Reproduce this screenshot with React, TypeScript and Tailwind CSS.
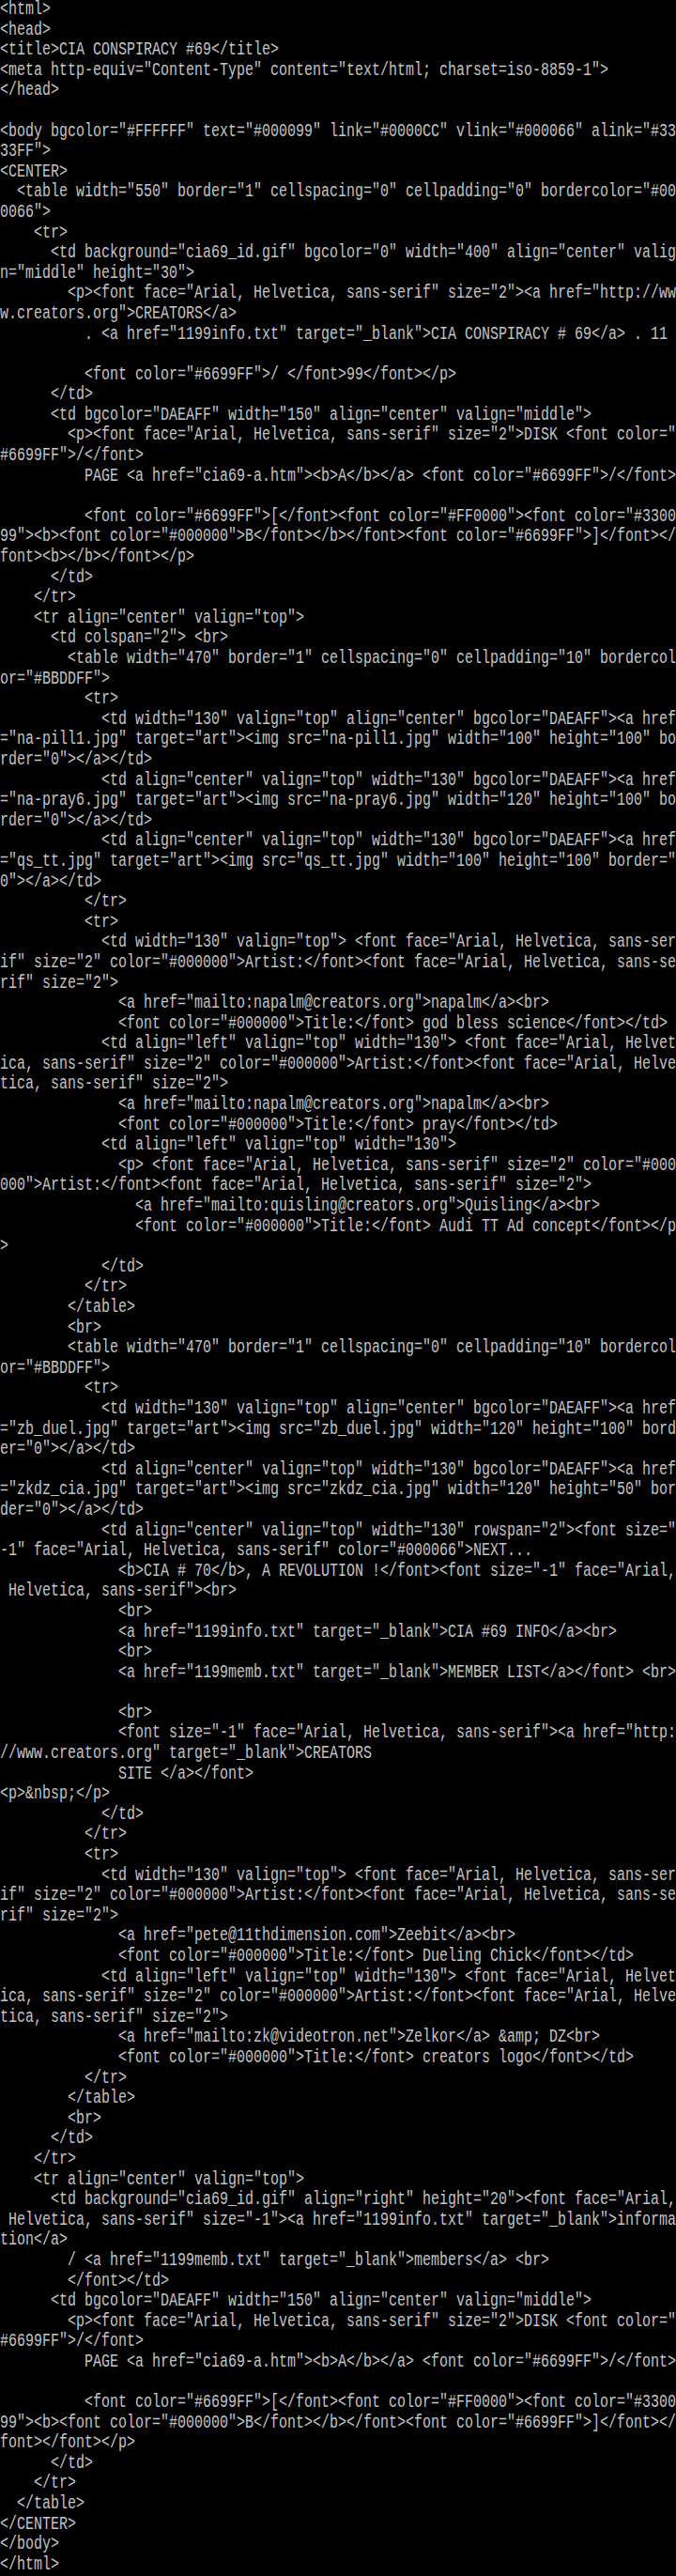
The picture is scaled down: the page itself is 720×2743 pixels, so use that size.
import React from "react";

const source = `<html>
<head>
<title>CIA CONSPIRACY #69</title>
<meta http-equiv="Content-Type" content="text/html; charset=iso-8859-1">
</head>

<body bgcolor="#FFFFFF" text="#000099" link="#0000CC" vlink="#000066" alink="#33
33FF">
<CENTER>
  <table width="550" border="1" cellspacing="0" cellpadding="0" bordercolor="#00
0066">
    <tr>
      <td background="cia69_id.gif" bgcolor="0" width="400" align="center" valig
n="middle" height="30">
        <p><font face="Arial, Helvetica, sans-serif" size="2"><a href="http://ww
w.creators.org">CREATORS</a>
          . <a href="1199info.txt" target="_blank">CIA CONSPIRACY # 69</a> . 11

          <font color="#6699FF">/ </font>99</font></p>
      </td>
      <td bgcolor="DAEAFF" width="150" align="center" valign="middle">
        <p><font face="Arial, Helvetica, sans-serif" size="2">DISK <font color="
#6699FF">/</font>
          PAGE <a href="cia69-a.htm"><b>A</b></a> <font color="#6699FF">/</font>

          <font color="#6699FF">[</font><font color="#FF0000"><font color="#3300
99"><b><font color="#000000">B</font></b></font><font color="#6699FF">]</font></
font><b></b></font></p>
      </td>
    </tr>
    <tr align="center" valign="top">
      <td colspan="2"> <br>
        <table width="470" border="1" cellspacing="0" cellpadding="10" bordercol
or="#BBDDFF">
          <tr>
            <td width="130" valign="top" align="center" bgcolor="DAEAFF"><a href
="na-pill1.jpg" target="art"><img src="na-pill1.jpg" width="100" height="100" bo
rder="0"></a></td>
            <td align="center" valign="top" width="130" bgcolor="DAEAFF"><a href
="na-pray6.jpg" target="art"><img src="na-pray6.jpg" width="120" height="100" bo
rder="0"></a></td>
            <td align="center" valign="top" width="130" bgcolor="DAEAFF"><a href
="qs_tt.jpg" target="art"><img src="qs_tt.jpg" width="100" height="100" border="
0"></a></td>
          </tr>
          <tr>
            <td width="130" valign="top"> <font face="Arial, Helvetica, sans-ser
if" size="2" color="#000000">Artist:</font><font face="Arial, Helvetica, sans-se
rif" size="2">
              <a href="mailto:napalm@creators.org">napalm</a><br>
              <font color="#000000">Title:</font> god bless science</font></td>
            <td align="left" valign="top" width="130"> <font face="Arial, Helvet
ica, sans-serif" size="2" color="#000000">Artist:</font><font face="Arial, Helve
tica, sans-serif" size="2">
              <a href="mailto:napalm@creators.org">napalm</a><br>
              <font color="#000000">Title:</font> pray</font></td>
            <td align="left" valign="top" width="130">
              <p> <font face="Arial, Helvetica, sans-serif" size="2" color="#000
000">Artist:</font><font face="Arial, Helvetica, sans-serif" size="2">
                <a href="mailto:quisling@creators.org">Quisling</a><br>
                <font color="#000000">Title:</font> Audi TT Ad concept</font></p
>
            </td>
          </tr>
        </table>
        <br>
        <table width="470" border="1" cellspacing="0" cellpadding="10" bordercol
or="#BBDDFF">
          <tr>
            <td width="130" valign="top" align="center" bgcolor="DAEAFF"><a href
="zb_duel.jpg" target="art"><img src="zb_duel.jpg" width="120" height="100" bord
er="0"></a></td>
            <td align="center" valign="top" width="130" bgcolor="DAEAFF"><a href
="zkdz_cia.jpg" target="art"><img src="zkdz_cia.jpg" width="120" height="50" bor
der="0"></a></td>
            <td align="center" valign="top" width="130" rowspan="2"><font size="
-1" face="Arial, Helvetica, sans-serif" color="#000066">NEXT...
              <b>CIA # 70</b>, A REVOLUTION !</font><font size="-1" face="Arial,
 Helvetica, sans-serif"><br>
              <br>
              <a href="1199info.txt" target="_blank">CIA #69 INFO</a><br>
              <br>
              <a href="1199memb.txt" target="_blank">MEMBER LIST</a></font> <br>

              <br>
              <font size="-1" face="Arial, Helvetica, sans-serif"><a href="http:
//www.creators.org" target="_blank">CREATORS
              SITE </a></font>
<p>&nbsp;</p>
            </td>
          </tr>
          <tr>
            <td width="130" valign="top"> <font face="Arial, Helvetica, sans-ser
if" size="2" color="#000000">Artist:</font><font face="Arial, Helvetica, sans-se
rif" size="2">
              <a href="pete@11thdimension.com">Zeebit</a><br>
              <font color="#000000">Title:</font> Dueling Chick</font></td>
            <td align="left" valign="top" width="130"> <font face="Arial, Helvet
ica, sans-serif" size="2" color="#000000">Artist:</font><font face="Arial, Helve
tica, sans-serif" size="2">
              <a href="mailto:zk@videotron.net">Zelkor</a> &amp; DZ<br>
              <font color="#000000">Title:</font> creators logo</font></td>
          </tr>
        </table>
        <br>
      </td>
    </tr>
    <tr align="center" valign="top">
      <td background="cia69_id.gif" align="right" height="20"><font face="Arial,
 Helvetica, sans-serif" size="-1"><a href="1199info.txt" target="_blank">informa
tion</a>
        / <a href="1199memb.txt" target="_blank">members</a> <br>
        </font></td>
      <td bgcolor="DAEAFF" width="150" align="center" valign="middle">
        <p><font face="Arial, Helvetica, sans-serif" size="2">DISK <font color="
#6699FF">/</font>
          PAGE <a href="cia69-a.htm"><b>A</b></a> <font color="#6699FF">/</font>

          <font color="#6699FF">[</font><font color="#FF0000"><font color="#3300
99"><b><font color="#000000">B</font></b></font><font color="#6699FF">]</font></
font></font></p>
      </td>
    </tr>
  </table>
</CENTER>
</body>
</html>`;

const lines = source.split("\n");

const App: React.FC = () => {
  return (
    <div className="min-h-[2743px] w-[720px] bg-black text-[#c4c4c4] font-['Liberation_Mono',monospace] text-[15px]">
      {lines.map((line, i) => (
        <div key={i} className="h-[21.6px] leading-[21.6px] whitespace-pre overflow-hidden">
          <span className="inline-block scale-y-[1.3]">{line}</span>
        </div>
      ))}
    </div>
  );
};

export default App;
